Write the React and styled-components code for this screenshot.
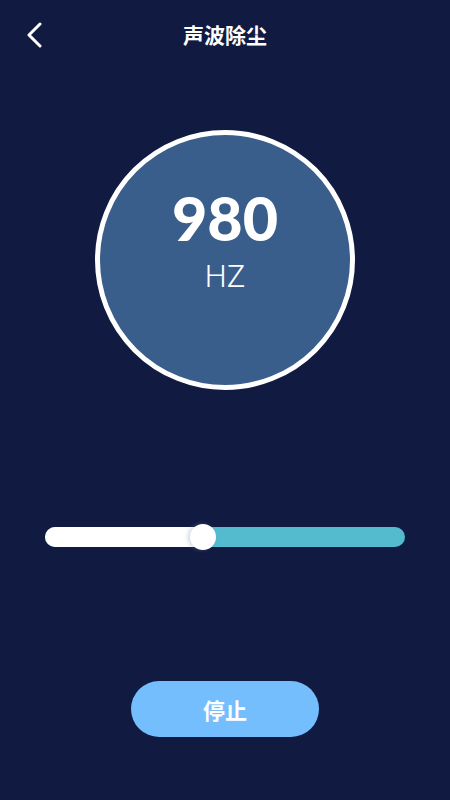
import React, { useState } from "react";
import styled, { createGlobalStyle } from "styled-components";

const Global = createGlobalStyle`
  html, body { margin: 0; padding: 0; background: #111a40; }
  body { font-family: "Noto Sans", "Noto Sans CJK SC", sans-serif; }
  * { box-sizing: border-box; }
`;

const Page = styled.div`
  width: 450px;
  height: 800px;
  background: #111a40;
  display: flex;
  flex-direction: column;
  align-items: center;
  color: #fff;
  overflow: hidden;
`;

const Header = styled.header`
  width: 100%;
  height: 70px;
  display: grid;
  grid-template-columns: 70px 1fr 70px;
  align-items: center;
`;

const BackButton = styled.button`
  background: none;
  border: none;
  padding: 0 0 0 24px;
  height: 70px;
  display: flex;
  align-items: center;
  cursor: pointer;
`;

const Title = styled.h1`
  margin: 0 0 2px;
  text-align: center;
  font-family: "Noto Sans CJK SC", sans-serif;
  font-weight: 700;
  font-size: 21px;
  color: #fff;
`;

const Dial = styled.div`
  margin-top: 60px;
  width: 260px;
  height: 260px;
  border-radius: 50%;
  border: 5px solid #ffffff;
  background: #3a5e8c;
  display: flex;
  flex-direction: column;
  align-items: center;
  padding-top: 50px;
`;

const Value = styled.div`
  font-family: "Lato", sans-serif;
  font-weight: 900;
  font-size: 61px;
  line-height: 66px;
`;

const Unit = styled.div`
  font-family: "Roboto", sans-serif;
  font-weight: 300;
  font-size: 31px;
  line-height: 36px;
  margin-top: 8px;
`;

const SliderWrap = styled.div`
  margin-top: 134px;
  width: 360px;
  height: 26px;
  position: relative;
  display: flex;
  align-items: center;
`;

const Track = styled.div`
  width: 100%;
  height: 20px;
  border-radius: 10px;
  background: #54bbcf;
  overflow: hidden;
  display: flex;
`;

const Fill = styled.div`
  height: 100%;
  background: #ffffff;
`;

const Thumb = styled.div`
  position: absolute;
  top: 0;
  width: 26px;
  height: 26px;
  margin-left: -13px;
  border-radius: 50%;
  background: #fff;
  box-shadow: -2px 0 4px rgba(120, 140, 180, 0.35);
`;

const StopButton = styled.button`
  margin-top: 131px;
  width: 188px;
  height: 56px;
  border-radius: 28px;
  border: none;
  background: #74befe;
  color: #fff;
  font-family: "Noto Sans CJK SC", sans-serif;
  font-weight: 700;
  font-size: 22px;
  cursor: pointer;
`;

export default function App() {
  const [pct] = useState(44);
  return (
    <Page>
      <Global />
      <Header>
        <BackButton aria-label="back">
          <svg width="20" height="26" viewBox="0 0 20 26">
            <path d="M16 2 L5 13 L16 24" fill="none" stroke="#fff" strokeWidth="3" strokeLinecap="round" strokeLinejoin="round" />
          </svg>
        </BackButton>
        <Title>声波除尘</Title>
        <div />
      </Header>
      <Dial>
        <Value>980</Value>
        <Unit>HZ</Unit>
      </Dial>
      <SliderWrap>
        <Track>
          <Fill style={{ width: `${pct}%` }} />
        </Track>
        <Thumb style={{ left: `${pct}%` }} />
      </SliderWrap>
      <StopButton>停止</StopButton>
    </Page>
  );
}
